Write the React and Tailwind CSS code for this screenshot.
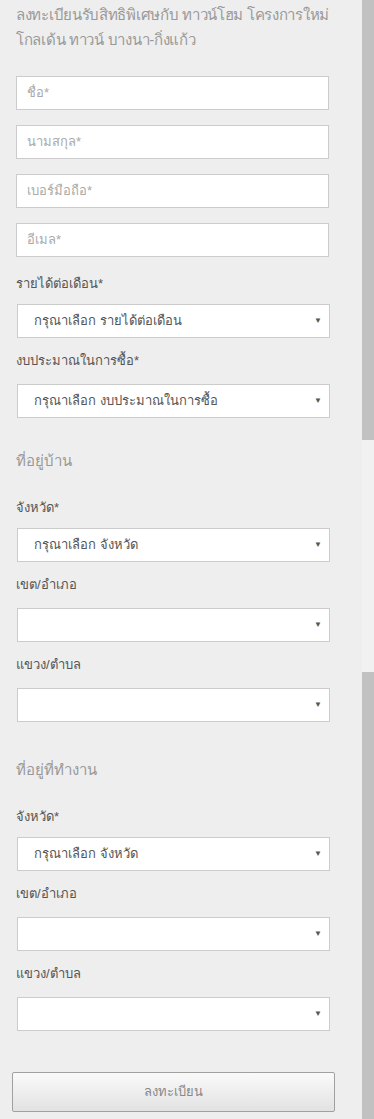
import React from 'react';

const font = { fontFamily: '"Liberation Sans", "Noto Sans", Tahoma, sans-serif' };

const TextField = ({ placeholder }) => (
  <div className="h-[34px] w-[313px] bg-white border border-[#cccccc] flex items-center pl-[10px] text-[13px] leading-[18px] text-[#aaaaaa]">
    {placeholder}
  </div>
);

const SelectBox = ({ value }) => (
  <div className="ml-[1px] h-[34px] w-[313px] bg-white border border-[#cccccc] flex items-center justify-between pl-[16px] pr-[7px] text-[13px] leading-[18px] text-[#555555]">
    <span>{value}</span>
    <span className="text-[8px] text-[#555555]">▼</span>
  </div>
);

const Label = ({ children, className = '' }) => (
  <div className={`text-[13px] leading-[18px] font-medium text-[#555555] ${className}`}>{children}</div>
);

const Heading = ({ children, className = '' }) => (
  <div className={`text-[15px] leading-[24px] text-[#999999] whitespace-nowrap ${className}`}>{children}</div>
);

const AddressBlock = ({ title, className = '' }) => (
  <div className={className}>
    <Heading>{title}</Heading>
    <Label className="mt-[26px] mb-[11px]">จังหวัด*</Label>
    <SelectBox value="กรุณาเลือก จังหวัด" />
    <Label className="mt-[14px] mb-[14px]">เขต/อำเภอ</Label>
    <SelectBox value="" />
    <Label className="mt-[14px] mb-[14px]">แขวง/ตำบล</Label>
    <SelectBox value="" />
  </div>
);

export default function App() {
  return (
    <div className="flex h-[1119px] w-[374px] overflow-hidden bg-[#eeeeee]" style={font}>
      <div className="w-[362px] pl-[16px] pt-[2px]">
        <Heading className="leading-[25px] tracking-[-0.3px]">
          ลงทะเบียนรับสิทธิพิเศษกับ ทาวน์โฮม โครงการใหม่
          <br />
          โกลเด้น ทาวน์ บางนา-กิ่งแก้ว
        </Heading>

        <div className="mt-[24px] flex flex-col gap-[15px]">
          <TextField placeholder="ชื่อ*" />
          <TextField placeholder="นามสกุล*" />
          <TextField placeholder="เบอร์มือถือ*" />
          <TextField placeholder="อีเมล*" />
        </div>

        <Label className="mt-[18px] mb-[11px]">รายได้ต่อเดือน*</Label>
        <SelectBox value="กรุณาเลือก รายได้ต่อเดือน" />
        <Label className="mt-[14px] mb-[14px]">งบประมาณในการซื้อ*</Label>
        <SelectBox value="กรุณาเลือก งบประมาณในการซื้อ" />

        <AddressBlock title="ที่อยู่บ้าน" className="mt-[31px]" />
        <AddressBlock title="ที่อยู่ที่ทำงาน" className="mt-[36px]" />

        <button className="mt-[41px] -ml-[4px] h-[40px] w-[323px] rounded-[2px] border border-[#a0a0a0] bg-gradient-to-b from-[#fafafa] to-[#e2e2e2] text-[13px] leading-[18px] text-[#888888]">
          ลงทะเบียน
        </button>
      </div>

      <div className="flex w-[12px] flex-col">
        <div className="h-[440px] bg-[#c1c1c1]" />
        <div className="h-[232px] bg-[#f1f1f1]" />
        <div className="flex-1 bg-[#c1c1c1]" />
      </div>
    </div>
  );
}
